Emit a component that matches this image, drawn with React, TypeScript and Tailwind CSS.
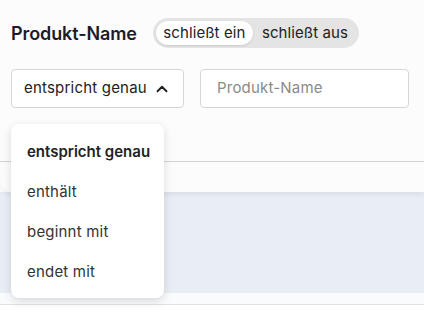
import { ChevronUp } from "lucide-react";

export default function App() {
  const options = ["entspricht genau", "enthält", "beginnt mit", "endet mit"];

  return (
    <div
      className="relative w-[424px] h-[313px] overflow-hidden bg-white flex flex-col text-[#222]"
      style={{ fontFamily: "Inter, 'Noto Sans', sans-serif" }}
    >
      {/* Filter card */}
      <div className="h-[192px] shrink-0 bg-[#fcfcfc] rounded-bl-xl shadow-[0_2px_6px_rgba(0,0,0,0.08)] z-10 flex flex-col">
        <div className="flex items-center pt-[18px] pl-[11px]">
          <span className="text-[18px] font-semibold text-[#1c1c28] tracking-[-0.1px]">
            Produkt-Name
          </span>
          <div className="ml-[16px] h-[30px] w-[206px] rounded-full bg-[#e4e4e4] flex items-center px-[3px]">
            <div className="h-[24px] w-[97px] rounded-full bg-white shadow-[0_1px_2px_rgba(0,0,0,0.12)] flex items-center justify-center text-[15px] tracking-[0.1px] text-[#222]">
              schließt ein
            </div>
            <span className="ml-[9px] text-[15px] tracking-[0.1px] text-[#222]">schließt aus</span>
          </div>
        </div>

        <div className="flex items-center mt-[21px] pl-[11px] gap-[16px]">
          <div className="h-[39px] w-[173px] rounded-[4px] border border-[#d6d6d6] bg-white flex items-center pl-[12px] pr-[12px] justify-between">
            <span className="text-[15px] tracking-[0.2px] text-[#222]">entspricht genau</span>
            <ChevronUp className="w-[18px] h-[18px] text-[#222]" strokeWidth={2.5} />
          </div>
          <div className="h-[39px] w-[209px] rounded-[4px] border border-[#d6d6d6] bg-white flex items-center pl-[16px]">
            <span className="text-[15px] tracking-[0.2px] text-[#8a8a8a]">Produkt-Name</span>
          </div>
        </div>

        <div className="mt-[53px] border-b border-[#d4d4d4]" />
      </div>

      {/* Table area */}
      <div className="h-[101px] shrink-0 bg-[#e9eef5]" />
      <div className="h-[12px] shrink-0 bg-[#fafbfc] border-b border-[#e2e2e2]" />
      <div className="flex-1 bg-white" />

      {/* Dropdown menu */}
      <div className="absolute left-[11px] top-[124px] w-[153px] h-[174px] z-20 rounded-[8px] bg-white shadow-[0_3px_10px_rgba(0,0,0,0.14)] pt-[8px] flex flex-col">
        {options.map((o, i) => (
          <div
            key={o}
            className={
              "h-[40px] flex items-center pl-[16px] text-[15px] " +
              (i === 0 ? "font-semibold text-[#222]" : "text-[#333] tracking-[0.2px]")
            }
          >
            {o}
          </div>
        ))}
      </div>
    </div>
  );
}
